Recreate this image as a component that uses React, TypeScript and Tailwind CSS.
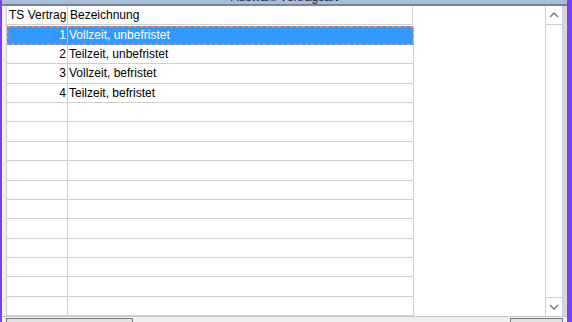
import React from "react";

const rows: { n?: number; t?: string }[] = [
  { n: 1, t: "Vollzeit, unbefristet" },
  { n: 2, t: "Teilzeit, unbefristet" },
  { n: 3, t: "Vollzeit, befristet" },
  { n: 4, t: "Teilzeit, befristet" },
  {}, {}, {}, {}, {}, {}, {}, {}, {}, {}, {},
];

const heights = [19, 19, 20, 19, 19, 20, 19, 20, 19, 19, 20, 19, 19, 20, 19];

export default function App() {
  return (
    <div
      className="w-[572px] h-[322px] flex overflow-hidden bg-[#f0f0f0] text-[12px] text-black"
      style={{ fontFamily: '"Liberation Sans", Arial, sans-serif' }}
    >
      <div className="w-[2px] h-full bg-[#7d3ff0]" />
      <div className="w-[565px] h-full flex flex-col">
        <div className="h-[4px] bg-[#a9bdd6] overflow-hidden flex justify-center">
          <div className="-mt-[10px] leading-[14px] text-[12px] text-[#1c2430]">Auswahl Vertragsart</div>
        </div>
        <div className="h-[2px] bg-[#74859a]" />
        <div className="h-[310px] flex">
          <div className="w-[4px] bg-[#f0f0f0]" />
          <div className="w-[539px] bg-white border-l border-[#cfcfcf] flex flex-col">
            <div className="h-[20px] flex border-b border-transparent">
              <div className="w-[61px] h-full border-r border-[#cfcfcf] border-b border-b-[#cfcfcf] pl-[2px] leading-[19px] whitespace-nowrap">
                TS Vertrag
              </div>
              <div className="w-[345px] h-full border-r border-[#cfcfcf] border-b border-b-[#cfcfcf] pl-[2px] leading-[19px] whitespace-nowrap">
                Bezeichnung
              </div>
              <div className="flex-1" />
            </div>
            {rows.map((r, i) => {
              const sel = i === 0;
              return (
                <div key={i} className="flex" style={{ height: heights[i] }}>
                  <div
                    className={
                      sel
                        ? "relative flex w-[407px] h-full bg-[#3399ff] text-white"
                        : "relative flex w-[407px] h-full"
                    }
                  >
                    <div
                      className={
                        sel
                          ? "w-[61px] h-full border-r border-[#9fcbff] text-right pr-[1px] leading-[18px]"
                          : "w-[61px] h-full border-r border-b border-[#cfcfcf] text-right pr-[1px] leading-[18px]"
                      }
                    >
                      {r.n}
                    </div>
                    <div
                      className={
                        sel
                          ? "w-[346px] h-full border-r border-[#cfcfcf] pl-[1px] leading-[18px] whitespace-nowrap"
                          : "w-[346px] h-full border-r border-b border-[#cfcfcf] pl-[1px] leading-[18px] whitespace-nowrap"
                      }
                    >
                      {r.t}
                    </div>
                    {sel && (
                      <svg className="absolute left-0 top-0" width="407" height={heights[i]}>
                        <rect
                          x="0.75"
                          y="0.75"
                          width="405.5"
                          height={heights[i] - 1.5}
                          fill="none"
                          stroke="#f4875a"
                          strokeWidth="1.5"
                          strokeDasharray="3 3"
                        />
                      </svg>
                    )}
                  </div>
                  <div className="flex-1" />
                </div>
              );
            })}
          </div>
          <div className="w-[18px] bg-white border-l border-r border-[#cfcfcf] flex flex-col">
            <div className="h-[19px] border-b border-[#cfcfcf] flex items-center justify-center">
              <svg width="10" height="6" viewBox="0 0 10 6">
                <path d="M1 5 L5 1 L9 5" fill="none" stroke="#707070" strokeWidth="1.3" />
              </svg>
            </div>
            <div className="flex-1" />
            <div className="h-[19px] border-t border-[#cfcfcf] flex items-center justify-center">
              <svg width="10" height="6" viewBox="0 0 10 6">
                <path d="M1 1 L5 5 L9 1" fill="none" stroke="#707070" strokeWidth="1.3" />
              </svg>
            </div>
          </div>
          <div className="w-[4px] bg-[#d6d6d6]" />
        </div>
        <div className="flex-1 flex pt-[1px] border-t border-[#c8c8c8] bg-[#f0f0f0]">
          <div className="ml-[4px] w-[127px] h-full border-t border-l border-r border-[#7a7a7a] bg-[#e1e1e1]" />
          <div className="flex-1" />
          <div className="mr-[4px] w-[53px] h-full border-t border-l border-r border-[#7a7a7a] bg-[#e1e1e1]" />
        </div>
      </div>
      <div className="w-[5px] h-full bg-[#7d3ff0]" />
    </div>
  );
}
